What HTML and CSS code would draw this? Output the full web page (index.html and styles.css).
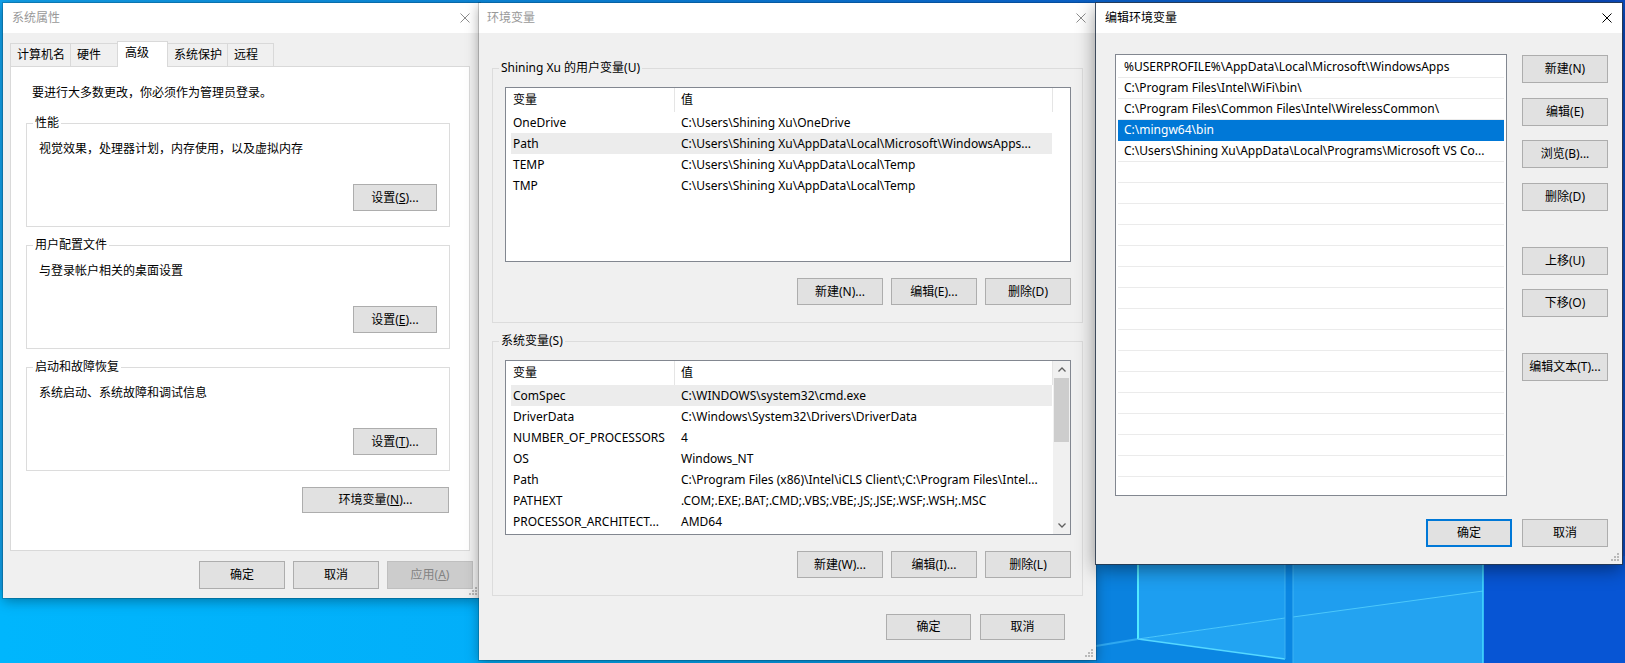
FILE: index.html
```html
<!DOCTYPE html>
<html lang="zh-CN">
<head>
<meta charset="utf-8">
<title>环境变量</title>
<link rel="stylesheet" href="styles.css">
</head>
<body>
<div class="desktop">
  <svg class="wallpaper" width="1625" height="663" viewBox="0 0 1625 663" aria-hidden="true">
    <defs>
      <linearGradient id="sky" x1="0" y1="0" x2="1" y2="0">
        <stop offset="0" stop-color="#12a3ee"/>
        <stop offset="0.35" stop-color="#0b86dc"/>
        <stop offset="0.7" stop-color="#0a62cf"/>
        <stop offset="1" stop-color="#0a4cc2"/>
      </linearGradient>
      <linearGradient id="floor" x1="0" y1="0" x2="1" y2="0">
        <stop offset="0" stop-color="#00b6fd"/>
        <stop offset="0.6" stop-color="#03acf8"/>
        <stop offset="1" stop-color="#0a90e6"/>
      </linearGradient>
    </defs>
    <rect width="1625" height="663" fill="url(#sky)"/>
    <rect x="0" y="590" width="1100" height="73" fill="url(#floor)"/>
    <rect x="1096" y="556" width="529" height="107" fill="#0755d4"/>
    <rect x="1096" y="556" width="42" height="107" fill="#0a82df"/>
    <polygon points="1096,646 1138,639 1285,659 1285,663 1096,663" fill="#0a86e2"/>
    <polygon points="1138,556 1285,556 1285,618 1138,639" fill="#1d9ef0"/>
    <polygon points="1138,639 1285,618 1285,659" fill="#22a4f2"/>
    <rect x="1285" y="556" width="8" height="107" fill="#0a86e2"/>
    <rect x="1293" y="556" width="190" height="107" fill="#1f9eef"/>
    <polygon points="1293,617 1483,591 1483,663 1293,663" fill="#23a3f1"/>
    <line x1="1096" y1="646" x2="1138" y2="639" stroke="#2fa8f0" stroke-width="2"/>
    <line x1="1138" y1="556" x2="1138" y2="639" stroke="#52eaff" stroke-width="2"/>
    <line x1="1138" y1="639" x2="1285" y2="659" stroke="#56d8ff" stroke-width="1.5"/>
    <line x1="1138" y1="639" x2="1285" y2="618" stroke="#4cc8fb" stroke-width="1"/>
    <line x1="1285" y1="556" x2="1285" y2="659" stroke="#3cb2f3" stroke-width="1"/>
    <line x1="1293" y1="617" x2="1483" y2="591" stroke="#4cc8fb" stroke-width="1"/>
    <line x1="1293" y1="556" x2="1293" y2="663" stroke="#3cb2f3" stroke-width="1"/>
    <line x1="1483" y1="556" x2="1483" y2="663" stroke="#46dcff" stroke-width="1.5"/>
  </svg>

  <section class="win win-sys">
    <header class="titlebar">
      <span class="title">系统属性</span>
      <svg class="close" width="10" height="10" viewBox="0 0 10 10"><path d="M0.5 0.5L9.5 9.5M9.5 0.5L0.5 9.5"/></svg>
    </header>
    <div class="sys-body">
      <div class="tabs">
        <div class="tab">计算机名</div>
        <div class="tab">硬件</div>
        <div class="tab active">高级</div>
        <div class="tab">系统保护</div>
        <div class="tab last">远程</div>
      </div>
      <div class="panel">
        <p class="notice">要进行大多数更改，你必须作为管理员登录。</p>
        <fieldset class="group">
          <legend>性能</legend>
          <p class="desc">视觉效果，处理器计划，内存使用，以及虚拟内存</p>
          <div class="group-actions"><button class="btn btn-set">设置(<u>S</u>)...</button></div>
        </fieldset>
        <fieldset class="group">
          <legend>用户配置文件</legend>
          <p class="desc">与登录帐户相关的桌面设置</p>
          <div class="group-actions"><button class="btn btn-set">设置(<u>E</u>)...</button></div>
        </fieldset>
        <fieldset class="group">
          <legend>启动和故障恢复</legend>
          <p class="desc">系统启动、系统故障和调试信息</p>
          <div class="group-actions"><button class="btn btn-set">设置(<u>T</u>)...</button></div>
        </fieldset>
        <div class="env-row"><button class="btn btn-env">环境变量(<u>N</u>)...</button></div>
      </div>
      <div class="dlg-buttons">
        <button class="btn">确定</button>
        <button class="btn">取消</button>
        <button class="btn" disabled>应用(<u>A</u>)</button>
      </div>
    </div>
    <svg class="grip" width="8" height="8" viewBox="0 0 8 8"><path d="M6 0h2v2h-2zM6 3h2v2h-2zM3 3h2v2h-2zM6 6h2v2h-2zM3 6h2v2h-2zM0 6h2v2h-2z"/></svg>
  </section>

  <section class="win win-env">
    <header class="titlebar">
      <span class="title">环境变量</span>
      <svg class="close" width="10" height="10" viewBox="0 0 10 10"><path d="M0.5 0.5L9.5 9.5M9.5 0.5L0.5 9.5"/></svg>
    </header>
    <div class="env-body">
      <fieldset class="group env-group">
        <legend>Shining Xu 的用户变量(U)</legend>
        <div class="listview">
          <div class="lv-content">
            <div class="lv-head"><span class="c1">变量</span><span class="c2">值</span></div>
            <div class="lv-row"><span class="c1">OneDrive</span><span class="c2">C:\Users\Shining Xu\OneDrive</span></div>
            <div class="lv-row sel"><span class="c1">Path</span><span class="c2">C:\Users\Shining Xu\AppData\Local\Microsoft\WindowsApps...</span></div>
            <div class="lv-row"><span class="c1">TEMP</span><span class="c2">C:\Users\Shining Xu\AppData\Local\Temp</span></div>
            <div class="lv-row"><span class="c1">TMP</span><span class="c2">C:\Users\Shining Xu\AppData\Local\Temp</span></div>
          </div>
        </div>
        <div class="group-buttons">
          <button class="btn btn-grp">新建(N)...</button>
          <button class="btn btn-grp">编辑(E)...</button>
          <button class="btn btn-grp">删除(D)</button>
        </div>
      </fieldset>
      <fieldset class="group env-group">
        <legend>系统变量(S)</legend>
        <div class="listview">
          <div class="lv-content">
            <div class="lv-head"><span class="c1">变量</span><span class="c2">值</span></div>
            <div class="lv-row sel"><span class="c1">ComSpec</span><span class="c2">C:\WINDOWS\system32\cmd.exe</span></div>
            <div class="lv-row"><span class="c1">DriverData</span><span class="c2">C:\Windows\System32\Drivers\DriverData</span></div>
            <div class="lv-row"><span class="c1">NUMBER_OF_PROCESSORS</span><span class="c2">4</span></div>
            <div class="lv-row"><span class="c1">OS</span><span class="c2">Windows_NT</span></div>
            <div class="lv-row"><span class="c1">Path</span><span class="c2">C:\Program Files (x86)\Intel\iCLS Client\;C:\Program Files\Intel...</span></div>
            <div class="lv-row"><span class="c1">PATHEXT</span><span class="c2">.COM;.EXE;.BAT;.CMD;.VBS;.VBE;.JS;.JSE;.WSF;.WSH;.MSC</span></div>
            <div class="lv-row"><span class="c1">PROCESSOR_ARCHITECT...</span><span class="c2">AMD64</span></div>
          </div>
          <div class="scrollbar">
            <div class="sb-arrow"><svg width="8" height="5" viewBox="0 0 8 5"><path d="M0.5 4.5L4 1L7.5 4.5"/></svg></div>
            <div class="sb-track"><div class="sb-thumb"></div></div>
            <div class="sb-arrow"><svg width="8" height="5" viewBox="0 0 8 5"><path d="M0.5 0.5L4 4L7.5 0.5"/></svg></div>
          </div>
        </div>
        <div class="group-buttons">
          <button class="btn btn-grp">新建(W)...</button>
          <button class="btn btn-grp">编辑(I)...</button>
          <button class="btn btn-grp">删除(L)</button>
        </div>
      </fieldset>
      <div class="env-footer">
        <button class="btn btn-env-ok">确定</button>
        <button class="btn btn-env-ok">取消</button>
      </div>
    </div>
    <svg class="grip" width="8" height="8" viewBox="0 0 8 8"><path d="M6 0h2v2h-2zM6 3h2v2h-2zM3 3h2v2h-2zM6 6h2v2h-2zM3 6h2v2h-2zM0 6h2v2h-2z"/></svg>
  </section>

  <section class="win win-edit">
    <header class="titlebar">
      <span class="title">编辑环境变量</span>
      <svg class="close" width="10" height="10" viewBox="0 0 10 10"><path d="M0.5 0.5L9.5 9.5M9.5 0.5L0.5 9.5"/></svg>
    </header>
    <div class="edit-body">
      <div class="edit-main">
        <div class="pathlist">
          <div class="pl-row">%USERPROFILE%\AppData\Local\Microsoft\WindowsApps</div>
          <div class="pl-row">C:\Program Files\Intel\WiFi\bin\</div>
          <div class="pl-row">C:\Program Files\Common Files\Intel\WirelessCommon\</div>
          <div class="pl-row sel">C:\mingw64\bin</div>
          <div class="pl-row">C:\Users\Shining Xu\AppData\Local\Programs\Microsoft VS Co...</div>
          <div class="pl-row"></div>
          <div class="pl-row"></div>
          <div class="pl-row"></div>
          <div class="pl-row"></div>
          <div class="pl-row"></div>
          <div class="pl-row"></div>
          <div class="pl-row"></div>
          <div class="pl-row"></div>
          <div class="pl-row"></div>
          <div class="pl-row"></div>
          <div class="pl-row"></div>
          <div class="pl-row"></div>
          <div class="pl-row"></div>
          <div class="pl-row"></div>
          <div class="pl-row"></div>
          <div class="pl-row"></div>
        </div>
        <div class="side-buttons">
          <button class="btn">新建(N)</button>
          <button class="btn">编辑(E)</button>
          <button class="btn">浏览(B)...</button>
          <button class="btn">删除(D)</button>
          <button class="btn spaced">上移(U)</button>
          <button class="btn">下移(O)</button>
          <button class="btn spaced">编辑文本(T)...</button>
        </div>
      </div>
      <div class="edit-footer">
        <button class="btn focused">确定</button>
        <button class="btn">取消</button>
      </div>
    </div>
    <svg class="grip" width="8" height="8" viewBox="0 0 8 8"><path d="M6 0h2v2h-2zM6 3h2v2h-2zM3 3h2v2h-2zM6 6h2v2h-2zM3 6h2v2h-2zM0 6h2v2h-2z"/></svg>
  </section>
</div>
</body>
</html>
```

FILE: styles.css
```css
* { box-sizing: border-box; }
html, body { margin: 0; padding: 0; }
body {
  width: 1625px;
  height: 663px;
  overflow: hidden;
  font-family: "Noto Sans", "Noto Sans CJK SC", sans-serif;
  font-size: 12px;
  color: #000;
}
p { margin: 0; }
u { text-underline-offset: 1px; }

.desktop {
  position: relative;
  width: 1625px;
  height: 663px;
  overflow: hidden;
  background: #0a74d6;
}
.wallpaper { position: absolute; left: 0; top: 0; display: block; }

/* windows on the desktop */
.win {
  position: absolute;
  display: flex;
  flex-direction: column;
  background: #f0f0f0;
  box-shadow: 0 0 0 1px rgba(0, 0, 0, 0.16), 0 3px 12px rgba(0, 0, 0, 0.35);
}
.win-sys { left: 3px; top: 3px; width: 477px; height: 595px; }
.win-env { left: 479px; top: 3px; width: 617px; height: 657px; }
.win-edit {
  left: 1096px; top: 3px; width: 526px; height: 561px;
  box-shadow: 0 0 0 1px rgba(40, 55, 75, 0.85), 0 5px 18px rgba(0, 0, 0, 0.45);
}

.titlebar {
  flex: none;
  height: 30px;
  background: #fff;
  display: flex;
  align-items: center;
  padding-left: 9px;
  color: #999;
  line-height: 16px;
}
.win-env .titlebar { padding-left: 8px; }
.win-edit .titlebar { color: #000; }
.close { margin-left: auto; margin-right: 10px; margin-top: -1px; }
.close path { stroke: #8c8c8c; stroke-width: 1; fill: none; }
.win-edit .close path { stroke: #000; }

.grip { position: absolute; right: 3px; bottom: 3px; }
.grip path { fill: #b9b9b9; }

/* buttons */
.btn {
  flex: none;
  width: 86px;
  height: 28px;
  padding: 0;
  margin: 0;
  background: #e1e1e1;
  border: 1px solid #adadad;
  border-radius: 0;
  font: inherit;
  font-size: 12px;
  line-height: 16px;
  color: #000;
  text-align: center;
  white-space: nowrap;
}
.btn:disabled { background: #cccccc; border-color: #bfbfbf; color: #838383; }
.btn.focused { border: 2px solid #0078d7; }
.btn-set { width: 84px; height: 27px; }
.btn-env { width: 147px; height: 26px; }
.btn-grp { height: 27px; }
.btn-env-ok { width: 85px; height: 26px; }

/* system properties */
.sys-body {
  flex: 1;
  display: flex;
  flex-direction: column;
  padding: 10px 0 0 7px;
}
.tabs { display: flex; align-items: flex-end; height: 23px; position: relative; z-index: 1; }
.tab {
  height: 23px;
  min-width: 47px;
  padding: 0 5px 0 6px;
  border: 1px solid #d9d9d9;
  border-right: none;
  border-bottom: none;
  line-height: 21px;
  background: #f0f0f0;
}
.tab.last { border-right: 1px solid #d9d9d9; }
.tab.active {
  height: 26px;
  min-width: 51px;
  margin-bottom: -1px;
  padding-left: 7px;
  background: #fff;
  border-right: 1px solid #d9d9d9;
  line-height: 22px;
}
.tab.active + .tab { border-left: none; }

.panel {
  width: 460px;
  height: 485px;
  background: #fff;
  border: 1px solid #d9d9d9;
  display: flex;
  flex-direction: column;
}
.notice { margin: 18px 0 0 21px; line-height: 16px; }

.group {
  margin: 0;
  padding: 0 0 15px 0;
  border: 1px solid #dcdcdc;
  min-inline-size: 0;
}
.group legend {
  margin-left: 6px;
  padding: 0 2px;
  line-height: 16px;
}
.panel .group { width: 424px; margin: 10px 0 0 15px; }
.panel .group:first-of-type { margin-top: 14px; }
.desc { margin: 10px 12px 0; line-height: 16px; }
.group-actions { display: flex; justify-content: flex-end; margin-top: 27px; padding-right: 12px; }
.env-row { display: flex; justify-content: flex-end; margin-top: 16px; padding-right: 20px; }

.dlg-buttons {
  display: flex;
  justify-content: flex-end;
  gap: 8px;
  margin-top: 10px;
  padding-right: 7px;
}

/* environment variables */
.env-body {
  flex: 1;
  display: flex;
  flex-direction: column;
  padding: 27px 13px 0 13px;
}
.env-group { width: 591px; padding: 0 0 17px 0; }
.env-group + .env-group { margin-top: 10px; }
.listview {
  width: 566px;
  height: 175px;
  margin: 11px 0 0 12px;
  border: 1px solid #828790;
  background: #fff;
  display: flex;
  overflow: hidden;
}
.lv-content { flex: 1; min-width: 0; }
.lv-head { display: flex; height: 24px; line-height: 24px; }
.lv-head .c1 { width: 169px; padding-left: 7px; border-right: 1px solid #e5e5e5; }
.lv-head .c2 { width: 378px; padding-left: 6px; border-right: 1px solid #e5e5e5; }
.lv-row {
  display: flex;
  height: 21px;
  line-height: 21px;
  width: 541px;
  margin-left: 5px;
  white-space: nowrap;
}
.lv-row.sel { background: #ececec; }
.lv-row .c1 { width: 163px; padding-left: 2px; overflow: hidden; flex: none; }
.lv-row .c2 { flex: 1; padding-left: 7px; overflow: hidden; }

.scrollbar { width: 17px; flex: none; display: flex; flex-direction: column; background: #f0f0f0; }
.sb-arrow { height: 17px; display: flex; align-items: center; justify-content: center; }
.sb-arrow path { stroke: #606060; stroke-width: 1.3; fill: none; }
.sb-track { flex: 1; padding: 0 1px; }
.sb-thumb { height: 64px; background: #cdcdcd; }

.group-buttons { display: flex; justify-content: flex-end; gap: 8px; margin-top: 16px; padding-right: 11px; }

.env-footer {
  display: flex;
  justify-content: flex-end;
  gap: 9px;
  margin-top: 18px;
  padding-right: 18px;
}

/* edit environment variable */
.edit-body {
  flex: 1;
  display: flex;
  flex-direction: column;
  padding: 21px 14px 0 19px;
}
.edit-main { display: flex; gap: 15px; height: 442px; }
.pathlist {
  width: 392px;
  height: 442px;
  border: 1px solid #828790;
  background: #fff;
  padding: 2px 1px 0 1px;
  overflow: hidden;
}
.pl-row {
  height: 21px;
  margin: 0 1px;
  padding-left: 6px;
  border-bottom: 1px solid #ebebeb;
  line-height: 20px;
  white-space: nowrap;
  overflow: hidden;
}
.pl-row.sel { background: #0078d7; color: #fff; border-bottom-color: #0078d7; }
.side-buttons { display: flex; flex-direction: column; gap: 14.5px; padding-top: 1px; }
.side-buttons .spaced { margin-top: 21.5px; }
.edit-footer { display: flex; justify-content: flex-end; gap: 10px; margin-top: 23px; }
```
